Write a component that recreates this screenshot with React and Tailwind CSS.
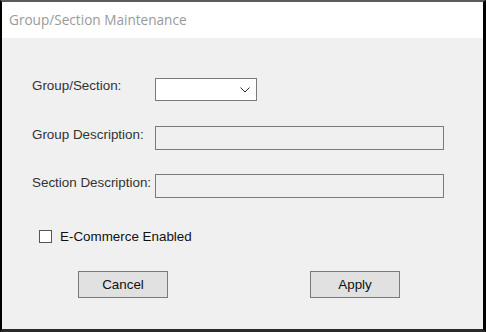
import React from "react";

const labelCls = "w-[123px] shrink-0 pb-[7px] text-[13.4px] leading-4 text-[#333]";

function Field({ label, children }) {
  return (
    <div className="flex items-center">
      <span className={labelCls}>{label}</span>
      {children}
    </div>
  );
}

export default function App() {
  return (
    <div
      className="w-[486px] h-[332px] flex flex-col bg-[#f0f0f0] border-l-2 border-t-2 border-r-[3px] border-b-[3px] border-l-black border-r-black border-t-[#5a5a5a] border-b-[#2a2a2a]"
      style={{ fontFamily: '"Liberation Sans", Arial, sans-serif' }}
    >
      {/* Title bar */}
      <div className="h-9 shrink-0 bg-white flex items-center pl-[7px]">
        <span
          className="text-[13.6px] text-[#9a9a9a]"
          style={{ fontFamily: '"Open Sans", "Noto Sans", sans-serif' }}
        >
          Group/Section Maintenance
        </span>
      </div>

      <div className="flex-1 flex flex-col pl-[30px] pt-10">
        <Field label="Group/Section:">
          <div className="w-[102px] h-[23px] bg-white border border-[#7a7a7a] flex items-center justify-end pr-[6px]">
            <svg width="10" height="6" viewBox="0 0 10 6" fill="none">
              <path d="M0.5 0.5L5 5L9.5 0.5" stroke="#333" strokeWidth="1" />
            </svg>
          </div>
        </Field>

        <div className="mt-[25px]">
          <Field label="Group Description:">
            <div className="w-[289px] h-6 border border-[#7a7a7a] bg-[#f0f0f0]" />
          </Field>
        </div>

        <div className="mt-6">
          <Field label="Section Description:">
            <div className="w-[289px] h-6 border border-[#7a7a7a] bg-[#f0f0f0]" />
          </Field>
        </div>

        <label className="mt-8 ml-[7px] h-[13px] flex items-center gap-[8px] text-[13.4px] leading-4 text-[#111]">
          <span className="w-[13px] h-[13px] shrink-0 bg-white border border-[#555]" />
          E-Commerce Enabled
        </label>

        <div className="mt-[28px] flex pl-[46px] gap-[142px]">
          <button className="w-[90px] h-[27px] bg-[#e1e1e1] border border-[#7a7a7a] text-[13.4px] leading-4 text-[#111]">
            Cancel
          </button>
          <button className="w-[90px] h-[27px] bg-[#e1e1e1] border border-[#7a7a7a] text-[13.4px] leading-4 text-[#111]">
            Apply
          </button>
        </div>
      </div>
    </div>
  );
}
